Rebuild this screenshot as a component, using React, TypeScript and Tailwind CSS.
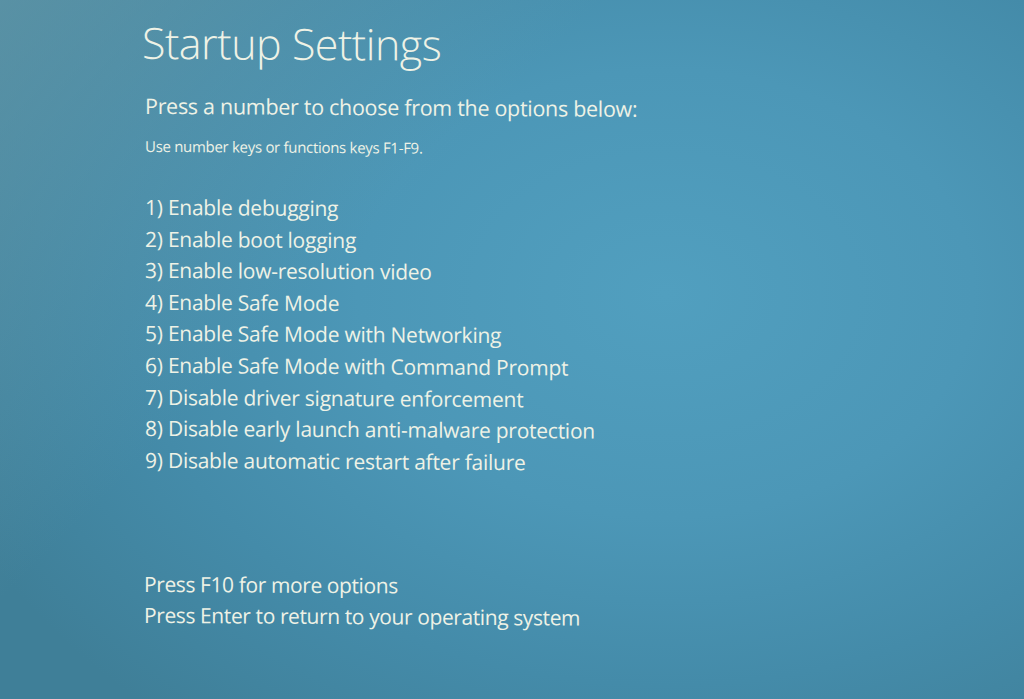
import React from "react";

const items = [
  "1) Enable debugging",
  "2) Enable boot logging",
  "3) Enable low-resolution video",
  "4) Enable Safe Mode",
  "5) Enable Safe Mode with Networking",
  "6) Enable Safe Mode with Command Prompt",
  "7) Disable driver signature enforcement",
  "8) Disable early launch anti-malware protection",
  "9) Disable automatic restart after failure",
];

export default function App() {
  return (
    <div
      className="w-[1024px] h-[699px] overflow-hidden bg-[linear-gradient(135deg,rgba(110,160,175,0.55)_0%,rgba(110,160,175,0)_35%),radial-gradient(ellipse_75%_80%_at_65%_42%,#519fbf_0%,#4c97b7_40%,#448ba9_70%,#3f7f98_100%)] text-[#eef2e6]"
      style={{ fontFamily: '"Open Sans", "Noto Sans", sans-serif' }}
    >
      <div className="origin-top-left skew-y-[0.35deg] pl-[142px] pt-[12px] flex flex-col">
        <h1 className="text-[43px] leading-[60px] font-light tracking-[-0.5px]">Startup Settings</h1>
        <p className="mt-[18px] text-[21.5px] leading-[30px] tracking-[-0.3px] pl-[3px]">
          Press a number to choose from the options below:
        </p>
        <p className="mt-[14px] text-[15px] leading-[22px] tracking-[-0.3px] pl-[3px]">
          Use number keys or functions keys F1-F9.
        </p>
        <ul className="mt-[35px] flex flex-col pl-[3px]">
          {items.map((t) => (
            <li key={t} className="text-[21px] leading-[31.6px] tracking-[-0.25px]">
              {t}
            </li>
          ))}
        </ul>
        <div className="mt-[93px] flex flex-col pl-[2px]">
          <p className="text-[21px] leading-[31px] tracking-[-0.4px]">Press F10 for more options</p>
          <p className="text-[21px] leading-[31px] tracking-[-0.4px]">
            Press Enter to return to your operating system
          </p>
        </div>
      </div>
    </div>
  );
}
